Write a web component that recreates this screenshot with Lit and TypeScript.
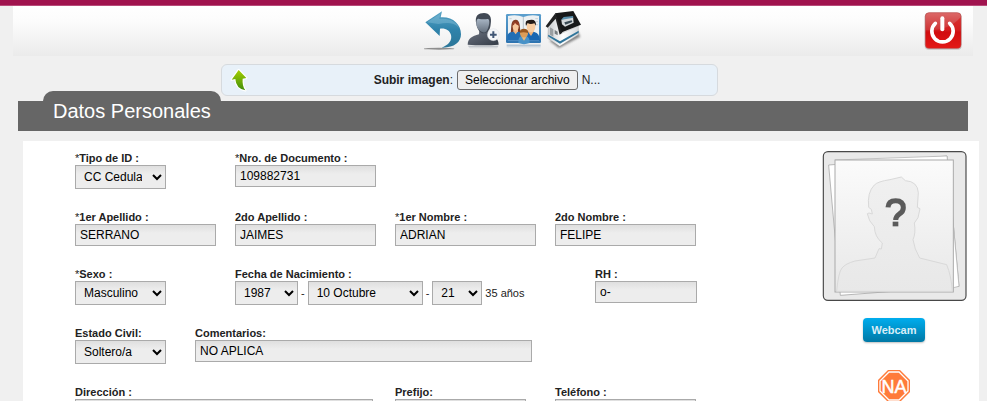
import { LitElement, html, css, svg, nothing } from "lit";
import { customElement, state } from "lit/decorators.js";

const backIcon = svg`
  <svg viewBox="27 30 120 120" width="40" height="40" aria-hidden="true">
    <defs>
      <linearGradient id="arrow" x1="0" y1="0" x2="0" y2="1">
        <stop offset="0" stop-color="#5aa5c6" /><stop offset=".5" stop-color="#2f83ab" /><stop offset="1" stop-color="#2b7698" />
      </linearGradient>
      <filter id="soft"><feGaussianBlur stdDeviation="1.6" /></filter>
    </defs>
    <ellipse cx="72" cy="146" rx="46" ry="3" fill="#777" opacity=".8" filter="url(#soft)" />
    <path d="M31 67 L81 34 L77 52 C112 49 138 72 138 103 C138 127 117 144 80 143 C101 135 112 121 108 105 C104 91 92 84 75 86 L74 108 Z" fill="url(#arrow)" />
    <path d="M36 67 L76 41 L73 57 C105 54 126 67 132 84 C116 66 96 68 70 72 Z" fill="#8cc4dc" opacity=".4" />
  </svg>`;

const userIcon = svg`
  <svg viewBox="147 30 120 120" width="40" height="40" aria-hidden="true">
    <defs>
      <linearGradient id="suit" x1="0" y1="0" x2="1" y2="1"><stop offset="0" stop-color="#6b7280" /><stop offset="1" stop-color="#343b46" /></linearGradient>
      <linearGradient id="face" x1="0" y1="0" x2="0" y2="1"><stop offset="0" stop-color="#a9b6c5" /><stop offset="1" stop-color="#65707e" /></linearGradient>
      <linearGradient id="mirror" x1="0" y1="0" x2="0" y2="1"><stop offset="0" stop-color="#aab0b8" /><stop offset="1" stop-color="#eee" stop-opacity="0" /></linearGradient>
    </defs>
    <path d="M159 137 H250 Q247 149 238 150 H172 Q162 147 159 137Z" fill="url(#mirror)" />
    <path d="M158 134 C159 114 171 109 192 103 L193 91 H220 L220 102 C240 108 250 114 251 134 Q205 138 158 134Z" fill="url(#suit)" />
    <path d="M184 72 C178 47 191 39 207 39 C224 39 231 51 227 73 C226 91 216 100 206 100 C195 100 187 88 184 72Z" fill="#414955" />
    <path d="M184 70 C184 58 188 55 193 57 C205 59 215 57 219 57 C226 60 222 78 219 85 C216 95 210 99 204 97 C192 94 184 82 184 70Z" fill="url(#face)" />
    <circle cx="235" cy="104" r="18" fill="#f3f5f8" stroke="#d4d8de" />
    <path d="M235 94 V114 M225 104 H245" stroke="#3f5575" stroke-width="6" />
  </svg>`;

const familyIcon = svg`
  <svg viewBox="267 30 120 120" width="40" height="40" aria-hidden="true">
    <defs>
      <linearGradient id="book" x1="0" y1="0" x2="0" y2="1"><stop offset="0" stop-color="#5b9fce" /><stop offset="1" stop-color="#2e74b0" /></linearGradient>
      <linearGradient id="shade" x1="0" y1="0" x2="0" y2="1"><stop offset="0" stop-color="#9db4c8" /><stop offset="1" stop-color="#eee" stop-opacity="0" /></linearGradient>
    </defs>
    <rect x="275" y="134" width="102" height="15" fill="url(#shade)" />
    <rect x="273" y="42" width="105" height="87" rx="4" fill="url(#book)" />
    <path d="M279 48 Q306 43 325 51 Q347 43 372 48 V122 H279Z" fill="#edf1f3" />
    <path d="M325 51 V122" stroke="#9ba9b3" stroke-width="2" />
    <path d="M283 56 H290 M361 56 H369 M362 65 H369 M362 74 H369" stroke="#b3bec6" stroke-width="2" />
    <path d="M287 101 C290 82 286 60 301 59 C317 58 314 84 317 101Z" fill="#813d25" />
    <path d="M277 122 V107 Q279 97 293 95 H313 Q324 99 325 122Z" fill="#216eb5" />
    <path d="M295 94 L302 103 L309 94 V84 H295Z" fill="#f0b684" />
    <ellipse cx="302" cy="79" rx="9" ry="13" fill="#f8c99e" />
    <path d="M292 77 C294 61 313 60 312 77 Q303 74 300 69 Q298 76 292 77Z" fill="#943b23" />
    <path d="M325 122 Q325 100 338 96 H358 Q374 99 375 122Z" fill="#1967b2" />
    <path d="M339 95 L348 108 L356 95 V87 H339Z" fill="#efb37b" />
    <ellipse cx="348" cy="80" rx="13" ry="17" fill="#f8cda1" />
    <path d="M333 78 Q328 59 344 60 Q364 56 363 77 L358 70 Q345 74 338 69Z" fill="#221a17" />
    <path d="M310 129 Q309 110 320 108 H334 Q345 112 344 129 Q327 136 310 129Z" fill="#4792c8" />
    <ellipse cx="327" cy="100" rx="12" ry="13" fill="#dc9d58" />
    <path d="M315 98 Q313 86 328 86 Q342 88 339 99 Q327 95 315 98Z" fill="#98571f" />
    <path d="M320 112 L327 122 L334 112" fill="#eab777" />
  </svg>`;

const houseIcon = svg`
  <svg viewBox="387 30 120 120" width="40" height="40" aria-hidden="true">
    <defs>
      <linearGradient id="wall" x1="0" y1="0" x2="1" y2="0"><stop offset="0" stop-color="#c9cccf" /><stop offset=".5" stop-color="#fff" /><stop offset="1" stop-color="#d5d8db" /></linearGradient>
      <filter id="blur"><feGaussianBlur stdDeviation="3" /></filter>
    </defs>
    <path d="M403 122 L432 144 L496 110 L487 92Z" fill="#555" opacity=".7" filter="url(#blur)" />
    <path d="M400 79 L421 52 L440 100 L490 78 V104 L434 139 L398 115Z" fill="url(#wall)" stroke="#999" />
    <path d="M400 104 L435 124 L491 92 V98 L435 131 L399 109Z" fill="#2f759b" />
    <path d="M405 82 L415 88 V110 L405 104Z" fill="#9a9fa2" />
    <path d="M419 90 L428 95 V106 L419 101Z" fill="#777d80" />
    <path d="M420 40 L475 33 L498 74 L437 98Z" fill="#171819" />
    <path d="M421 40 L392 79 L398 83 L422 56 L434 104 L442 98Z" fill="#222324" />
    <path d="M439 60 L447 53 L474 50 L476 68 L450 80 L441 73Z" fill="#d5d9dc" />
    <path d="M438 60 L446 51 L474 48 L475 53 L449 58Z" fill="#5a8fac" />
    <path d="M448 67 L470 61 L472 66 L451 74Z" fill="#3a4a54" />
  </svg>`;

const powerIcon = svg`
  <svg viewBox="69 30 120 120" width="40" height="40" aria-hidden="true">
    <defs>
      <linearGradient id="red" x1="0" y1="0" x2="0" y2="1"><stop offset="0" stop-color="#dc6968" /><stop offset=".48" stop-color="#cf3436" /><stop offset=".55" stop-color="#c90e12" /><stop offset="1" stop-color="#f02925" /></linearGradient>
    </defs>
    <rect x="74" y="39" width="111" height="110" rx="12" fill="#aaa" opacity=".6" />
    <rect x="76" y="38" width="107" height="107" rx="11" fill="url(#red)" stroke="#b84747" stroke-width="2" />
    <path d="M78 91 Q145 94 182 52 V132 Q182 144 171 144 H88 Q78 144 78 133Z" fill="#d90c0d" opacity=".55" />
    <path d="M106 70 A32 32 0 1 0 149 70" fill="none" stroke="#fff" stroke-width="11" stroke-linecap="round" />
    <path d="M127 55 V88" stroke="#fff" stroke-width="12" stroke-linecap="round" />
  </svg>`;

const uploadIcon = svg`
  <svg viewBox="60 38 57 72" width="19" height="24" aria-hidden="true">
    <defs><linearGradient id="leaf" x1="0" y1="0" x2="0" y2="1"><stop offset="0" stop-color="#a4cf00" /><stop offset="1" stop-color="#3f8d0c" /></linearGradient></defs>
    <path d="M86 44 L109 68 L98 70 Q96 92 106 105 Q78 100 76 71 L65 73Z" fill="url(#leaf)" stroke="#fff" stroke-width="7" stroke-linejoin="round" paint-order="stroke" />
  </svg>`;

const portrait = svg`
  <svg viewBox="33 33 438 450" width="146" height="150" role="img" aria-label="Sin foto">
    <defs>
      <linearGradient id="paper" x1="0" y1="0" x2="0" y2="1"><stop offset="0" stop-color="#fbfbfb" /><stop offset="1" stop-color="#e8e8e8" /></linearGradient>
      <linearGradient id="person" x1="0" y1="0" x2="0" y2="1"><stop offset="0" stop-color="#f0f0f0" /><stop offset="1" stop-color="#e8e8e8" /></linearGradient>
    </defs>
    <rect x="40" y="35" width="428" height="446" rx="14" fill="#e9e9e9" stroke="#484848" stroke-width="3.5" />
    <path d="M56 75 L411 48 L447 439 L91 466Z" fill="#fff" stroke="#999" stroke-width="2" />
    <path d="M75 60 L411 48 L447 439 L430 443" fill="#fff" stroke="#aaa" stroke-width="2" />
    <rect x="75" y="60" width="355" height="396" fill="url(#paper)" stroke="#aaa" stroke-width="3" />
    <path d="M80 454 Q85 397 96 384 Q106 371 135 363 L195 354 L207 326 L214 327 L217 309 Q194 291 193 260 L179 242 L172 221 L177 219 L187 222 L184 208 L176 202 Q171 157 193 135 Q204 124 240 119 L274 111 L286 122 Q323 124 325 158 L322 202 L330 206 L324 233 L313 249 Q318 279 309 299 Q313 327 329 354 L410 374 Q424 408 427 454Z" fill="url(#person)" stroke="#d9d9d9" stroke-width="3" />
    <path d="M234 202 Q235 182 257 182 Q280 182 280 203 Q280 215 268 222 Q257 230 257 240" fill="none" stroke="#5b5b5b" stroke-width="15" />
    <rect x="248" y="245" width="17" height="14" fill="#5b5b5b" />
  </svg>`;

const naSign = svg`
  <svg viewBox="0 0 32 32" width="32" height="32" role="img" aria-label="NA">
    <path d="M10 0 H22 L32 10 V22 L22 32 H10 L0 22 V10Z" fill="#ff7b3a" />
    <path d="M11 2 H21 L30 11 V21 L21 30 H11 L2 21 V11Z" fill="none" stroke="#fff" stroke-width="1.3" />
    <text class="na" x="16" y="23" text-anchor="middle">NA</text>
  </svg>`;

type Size = "rh" | "text" | "address" | "comment" | "month" | "year" | "day" | "pick" | "prefix";

const pick = (id: string, size: Size, options: string[], name?: string) => html`
  <select id=${id} class="control ${size}" aria-label=${name ?? nothing}>
    ${options.map((o) => html`<option>${o}</option>`)}
  </select>`;

const box = (id: string, size: Size, value = "") =>
  html`<input id=${id} class="control ${size}" type="text" .value=${value} />`;

@customElement("app-root")
class AppRoot extends LitElement {
  @state() private fileName = "N...";

  static styles = css`
    :host {
      display: block;
      min-height: 100vh;
      background: #f0f0f0;
      color: #222;
      font: 12px/14px "Liberation Sans", Arial, sans-serif;
    }
    * { box-sizing: border-box; }
    svg { display: block; }
    .strip { height: 6px; background: #a0134e; border-bottom: 1px solid #b84b79; }
    .toolbar {
      display: flex;
      align-items: flex-start;
      height: 50px;
      margin: 0 14px 0 13px;
      padding: 4px 10px 0 72px;
      background: linear-gradient(#fff 0%, #fcfcfc 30%, #ebebeb 100%);
    }
    .tools { flex: 1; display: flex; justify-content: center; }
    .tool { padding: 0; border: 0; background: none; cursor: pointer; }
    .upload {
      display: flex;
      align-items: center;
      height: 32px;
      margin: 8px 269px 0 221px;
      padding: 0 8px;
      border: 1px solid #d6dade;
      border-radius: 6px;
      background: #e8f1f9;
    }
    .chooser { flex: 1; display: flex; align-items: center; justify-content: center; gap: 4px; padding-left: 16px; }
    .file {
      height: 20px;
      padding: 0 7px;
      border: 1px solid #6b6b6b;
      border-radius: 3px;
      background: #efefef;
      color: #000;
      font: inherit;
    }
    .bar { display: flex; height: 30px; margin: 5px 19px 0 18px; background: #666; }
    .title {
      height: 40px;
      margin: -10px 0 0 25px;
      padding: 0 10px;
      border-radius: 10px 10px 0 0;
      background: #666;
      color: #fff;
      font-size: 20px;
      font-weight: 400;
      line-height: 40px;
    }
    .panel {
      display: flex;
      justify-content: space-between;
      margin: 10px 8px 0 23px;
      padding: 10px 12px 24px 52px;
      background: #fff;
    }
    .form { flex: 1; display: grid; gap: 21px; align-content: start; min-width: 0; }
    .row { display: grid; grid-template-columns: repeat(16, minmax(0, 40px)); align-items: start; }
    .field { display: grid; justify-items: start; min-width: 0; }
    .span3 { grid-column: span 3; }
    .span4 { grid-column: span 4; }
    .span8 { grid-column: span 8; }
    .span9 { grid-column: span 9; }
    .label { padding-top: 1px; font-size: 11px; line-height: 13px; font-weight: 700; white-space: nowrap; }
    .star { font-weight: 400; }
    .control {
      max-width: 100%;
      margin: 0;
      border: 1px solid #aaa;
      border-radius: 0;
      background: linear-gradient(#dfdfdf 0, #ededed 8px);
      color: #000;
      font: inherit;
    }
    input.control { height: 22px; padding: 0 4px; }
    select.control { height: 24px; padding: 0 7px 0 4px; }
    .rh { width: 102px; }
    .prefix { width: 131px; }
    .text { width: 141px; }
    .address { width: 298px; }
    .comment { width: 337px; }
    .pick { width: 91px; }
    .year { width: 63px; }
    .month { width: 115px; }
    .day { width: 50px; }
    .dates { display: flex; align-items: center; gap: 3px; font-size: 11px; white-space: nowrap; }
    .dates .control { font-size: 12px; }
    .side { display: flex; flex-direction: column; align-items: center; }
    .webcam {
      height: 24px;
      margin: 17px 0 28px;
      padding: 0 8px;
      border: 0;
      border-radius: 4px;
      background: linear-gradient(#00adee, #0078a5);
      box-shadow: 0 1px 2px rgba(0, 0, 0, 0.25);
      color: #d9eef7;
      font: 700 11px/24px "Liberation Sans", Arial, sans-serif;
    }
    .na { fill: #fff; font: 18px "Liberation Sans", Arial, sans-serif; stroke: #fff; stroke-width: 0.5px; }
  `;

  private field(span: string, id: string, label: string, control: unknown, required = false) {
    return html`<div class="field ${span}">
      <label class="label" for=${id}>${required ? html`<span class="star">*</span>` : nothing}${label}</label>
      ${control}
    </div>`;
  }

  private openPicker() {
    this.renderRoot.querySelector<HTMLInputElement>("#archivo")?.click();
  }

  private onFile(e: Event) {
    this.fileName = (e.target as HTMLInputElement).files?.[0]?.name ?? "N...";
  }

  render() {
    return html`
      <div class="strip"></div>
      <header class="toolbar">
        <nav class="tools">
          <button class="tool" aria-label="Volver">${backIcon}</button>
          <button class="tool" aria-label="Agregar paciente">${userIcon}</button>
          <button class="tool" aria-label="Familia">${familyIcon}</button>
          <button class="tool" aria-label="Inicio">${houseIcon}</button>
        </nav>
        <button class="tool" aria-label="Salir">${powerIcon}</button>
      </header>
      <div class="upload">
        ${uploadIcon}
        <div class="chooser">
          <label for="archivo"><b>Subir imagen</b>:</label>
          <input id="archivo" type="file" hidden @change=${this.onFile} />
          <button class="file" @click=${this.openPicker}>Seleccionar archivo</button>
          <span>${this.fileName}</span>
        </div>
      </div>
      <div class="bar"><h2 class="title">Datos Personales</h2></div>
      <main class="panel">
        <form class="form">
          <div class="row">
            ${this.field("span4", "tipo", "Tipo de ID :", pick("tipo", "pick", ["CC Cedula de Ciudadania"]), true)}
            ${this.field("span4", "nro", "Nro. de Documento :", box("nro", "text", "109882731"), true)}
          </div>
          <div class="row">
            ${this.field("span4", "ape1", "1er Apellido :", box("ape1", "text", "SERRANO"), true)}
            ${this.field("span4", "ape2", "2do Apellido :", box("ape2", "text", "JAIMES"))}
            ${this.field("span4", "nom1", "1er Nombre :", box("nom1", "text", "ADRIAN"), true)}
            ${this.field("span4", "nom2", "2do Nombre :", box("nom2", "text", "FELIPE"))}
          </div>
          <div class="row">
            ${this.field("span4", "sexo", "Sexo :", pick("sexo", "pick", ["Masculino", "Femenino"]), true)}
            ${this.field(
              "span9",
              "anio",
              "Fecha de Nacimiento :",
              html`<div class="dates">
                ${pick("anio", "year", ["1987"])}<span>-</span>${pick("mes", "month", ["10 Octubre"], "Mes")}<span>-</span
                >${pick("dia", "day", ["21"], "Día")}<span>35 años</span>
              </div>`
            )}
            ${this.field("span3", "rh", "RH :", box("rh", "rh", "o-"))}
          </div>
          <div class="row">
            ${this.field("span3", "civil", "Estado Civil:", pick("civil", "pick", ["Soltero/a", "Casado/a"]))}
            ${this.field("span9", "coment", "Comentarios:", box("coment", "comment", "NO APLICA"))}
          </div>
          <div class="row">
            ${this.field("span8", "dir", "Dirección :", box("dir", "address"))}
            ${this.field("span4", "prefijo", "Prefijo:", box("prefijo", "prefix"))}
            ${this.field("span4", "tel", "Teléfono :", box("tel", "text"))}
          </div>
        </form>
        <aside class="side">
          ${portrait}
          <button class="webcam">Webcam</button>
          ${naSign}
        </aside>
      </main>
    `;
  }
}
